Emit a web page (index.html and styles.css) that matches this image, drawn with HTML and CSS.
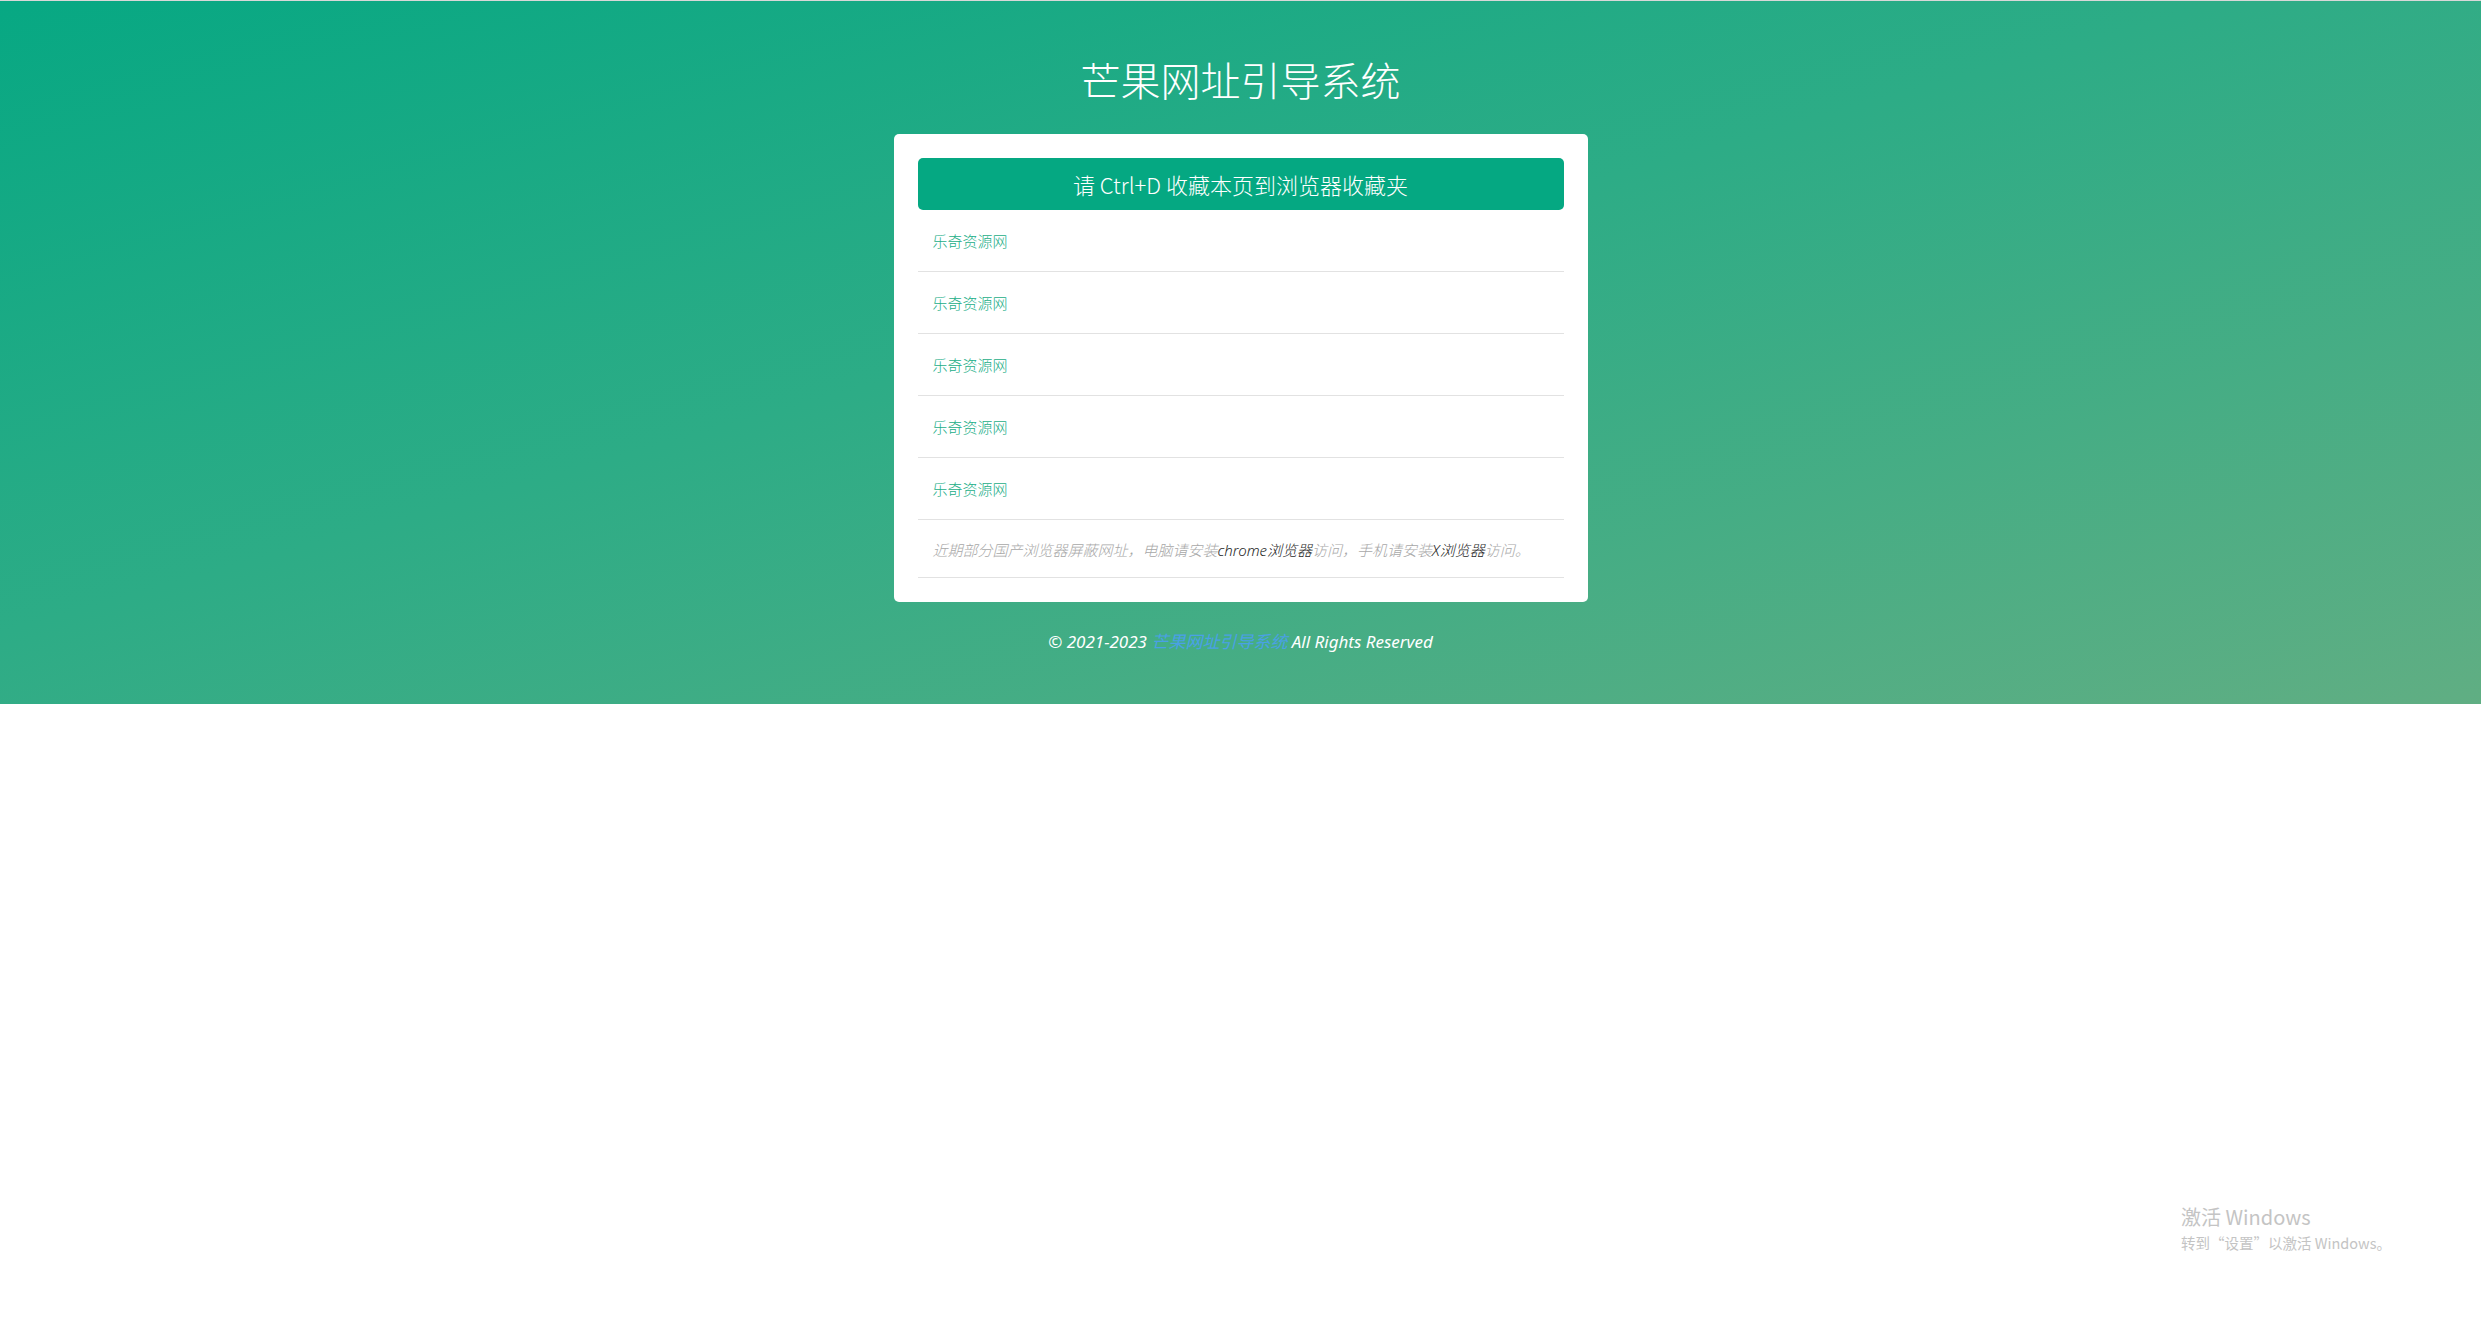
FILE: index.html
```html
<!DOCTYPE html>
<html lang="zh-CN">
<head>
<meta charset="utf-8">
<title>芒果网址引导系统</title>
<link rel="stylesheet" href="styles.css">
</head>
<body>
<header class="hero">
  <h1 class="title">芒果网址引导系统</h1>
  <main class="card">
    <div class="notice">请 Ctrl+D 收藏本页到浏览器收藏夹</div>
    <ul class="list">
      <li class="item"><a class="link" href="#">乐奇资源网</a></li>
      <li class="item"><a class="link" href="#">乐奇资源网</a></li>
      <li class="item"><a class="link" href="#">乐奇资源网</a></li>
      <li class="item"><a class="link" href="#">乐奇资源网</a></li>
      <li class="item"><a class="link" href="#">乐奇资源网</a></li>
      <li class="item note">近期部分国产浏览器屏蔽网址，电脑请安装<span class="dark">chrome浏览器</span>访问，手机请安装<span class="dark">X浏览器</span>访问。</li>
    </ul>
  </main>
  <footer class="footer">© 2021-2023 <a class="footer-link" href="#">芒果网址引导系统</a> All Rights Reserved</footer>
</header>
<div class="watermark">
  <div class="wm-title">激活 Windows</div>
  <div class="wm-sub">转到“设置”以激活 Windows。</div>
</div>
</body>
</html>
```
FILE: styles.css
```css
html, body {
  margin: 0;
  padding: 0;
  background: #fff;
}
body {
  font-family: "Noto Sans", "Noto Sans CJK SC", sans-serif;
  min-height: 1319px;
  position: relative;
}
.hero {
  border-top: 1px solid #d8d8d8;
  background: linear-gradient(to bottom right, #07a883 0%, #2dac86 45%, #60ae83 100%);
  padding-top: 54px;
  box-sizing: border-box;
  height: 704px;
  display: flex;
  flex-direction: column;
  align-items: center;
}
.title {
  margin: 0;
  font-family: "Noto Sans CJK SC", sans-serif;
  font-weight: 300;
  font-size: 40px;
  line-height: 48px;
  color: #fff;
}
.card {
  margin-top: 31px;
  width: 694px;
  box-sizing: border-box;
  padding: 24px;
  background: #fff;
  border-radius: 5px;
}
.notice {
  height: 52px;
  line-height: 52px;
  background: #05a882;
  color: #fff;
  border-radius: 5px;
  text-align: center;
  font-family: "Noto Sans CJK SC", sans-serif;
  font-weight: 300;
  font-size: 22px;
}
.list {
  list-style: none;
  margin: 0;
  padding: 0;
}
.item {
  height: 61px;
  border-bottom: 1px solid #e2e2e2;
  display: flex;
  align-items: center;
  padding-left: 15px;
  font-size: 15px;
}
.link {
  color: #1aae87;
  text-decoration: none;
  font-family: "Noto Sans CJK SC", sans-serif;
  font-weight: 300;
}
.note {
  color: #a8a8a8;
  font-style: italic;
  font-weight: 300;
  white-space: nowrap;
  padding-top: 2px;
  height: 55px;
}
.dark {
  color: #1e1e1e;
}
.footer {
  margin-top: 28px;
  color: #fff;
  font-style: italic;
  font-size: 17px;
  line-height: 24px;
}
.footer-link {
  color: #4aa0e6;
  text-decoration: none;
}
.watermark {
  position: absolute;
  left: 2181px;
  top: 1204px;
  color: #c4c4c4;
  font-family: "Noto Sans CJK SC", sans-serif;
}
.wm-title {
  font-size: 20px;
  line-height: 26px;
}
.wm-sub {
  font-size: 14.5px;
  line-height: 22px;
  margin-top: 2px;
}
```
